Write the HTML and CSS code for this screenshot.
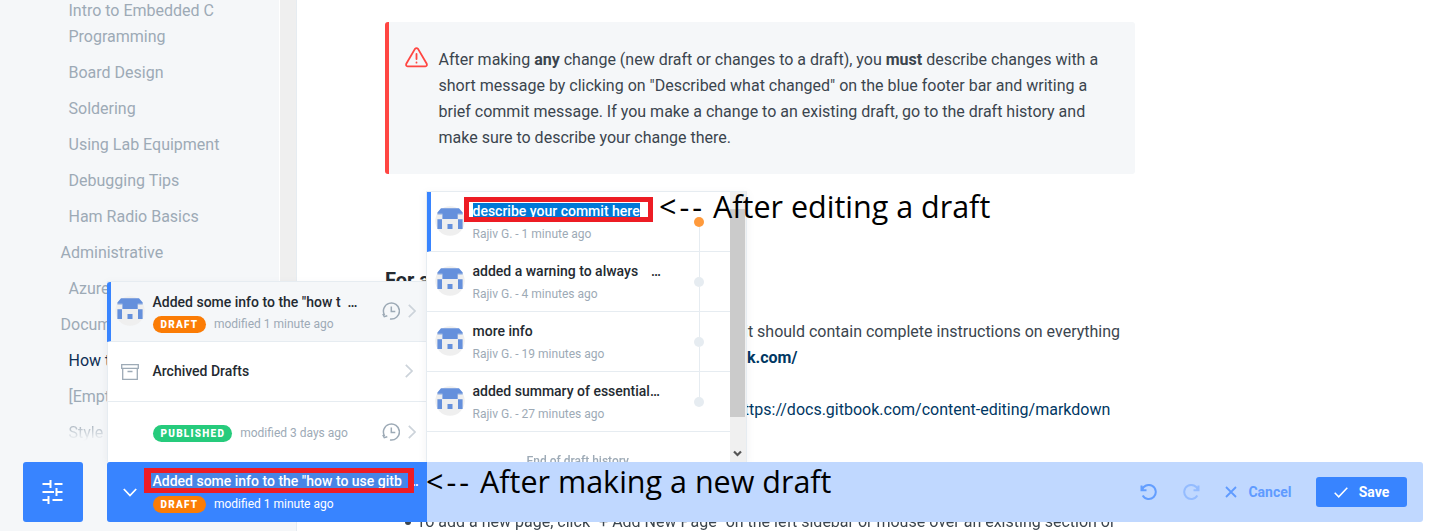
FILE: index.html
```html
<!DOCTYPE html>
<html lang="en">
<head>
<meta charset="utf-8">
<title>Draft workflow</title>
<link rel="stylesheet" href="styles.css">
</head>
<body>
<svg class="defs" aria-hidden="true">
  <symbol id="avatar" viewBox="0 0 30 30">
    <circle cx="15" cy="15" r="14.7" fill="#efefef"/>
    <path fill="#6590dc" d="M6 2.300h18l3.700 4.200v1.300h-5v5.200H7.400V7.800H2.400V6.500zM2.400 13.200h4.600v9.900h-4.600zM23 13.200h4.600v9.900H23zM12.500 18h5v5.100h-5z"/>
    <path d="M2.400 7.800h5v1h-5zM22.700 7.800h5v1h-5z" fill="#6590dc" opacity=".5"/>
  </symbol>
  <symbol id="history" viewBox="0 0 18 18">
    <path d="M2.600 13.200A8 8 0 1 1 8 16.900M.800 11.800l1.500 2.900 3-1M9.300 4.600v5h4" fill="none" stroke="currentColor" stroke-width="1.500"/>
  </symbol>
  <symbol id="chevron" viewBox="0 0 8 14">
    <path d="M.8.8 7 7 .8 13.200" fill="none" stroke="currentColor" stroke-width="1.700"/>
  </symbol>
</svg>
<div class="app">
  <aside class="sidebar">
    <nav class="nav">
      <a class="sub">Intro to Embedded C Programming</a>
      <a class="sub">Board Design</a>
      <a class="sub">Soldering</a>
      <a class="sub">Using Lab Equipment</a>
      <a class="sub">Debugging Tips</a>
      <a class="sub">Ham Radio Basics</a>
      <a>Administrative</a>
      <a class="sub">Azure</a>
      <a>Documentation</a>
      <a class="sub current">How to</a>
      <a class="sub">[Empty]</a>
      <a class="sub fade">Style</a>
    </nav>
    <div class="track"></div>
  </aside>

  <main class="content">
    <div class="callout">
      <svg class="warn" viewBox="0 0 24 22" fill="none" stroke="#ff4642" stroke-width="1.900" stroke-linecap="round" stroke-linejoin="round"><path d="M10.400 2 1.300 17.600Q.6 20 2.700 20.200H21.300Q23.400 20 22.700 17.600L13.600 2Q12 .2 10.400 2zM12 7.300v5.400M12 16.200v.2"/></svg>
      <p>After making <b>any</b> change (new draft or changes to a draft), you <b>must</b> describe changes with a short message by clicking on "Described what changed" on the blue footer bar and writing a brief commit message. If you make a change to an existing draft, go to the draft history and make sure to describe your change there.</p>
    </div>
    <h2>For a</h2>
    <p class="tail">it should contain complete instructions on everything<br><b class="link host">k.com/</b></p>
    <p class="tail url link">https://docs.gitbook.com/content-editing/markdown</p>
    <div class="bullet"><i></i><span>To add a new page, click "+ Add New Page" on the left sidebar or mouse over an existing section or</span></div>
  </main>

  <section class="drafts">
    <div class="draft active">
      <svg class="avatar"><use href="#avatar"/></svg>
      <div class="info"><div class="title">Added some info to the "how t&nbsp; …</div><div class="meta"><span class="badge">DRAFT</span>modified 1 minute ago</div></div>
      <svg class="clock"><use href="#history"/></svg><svg class="chev"><use href="#chevron"/></svg>
    </div>
    <div class="draft archived">
      <svg class="archive" viewBox="0 0 18 16" fill="none" stroke="#9daab6" stroke-width="1.300"><path d="M.7.7h16.600v3.600H.7zM1.700 4.300v11h14.600v-11M6.500 7.500h5"/></svg>
      <div class="info"><div class="title">Archived Drafts</div></div>
      <svg class="chev far"><use href="#chevron"/></svg>
    </div>
    <div class="draft published">
      <span class="blank"></span>
      <div class="info"><div class="meta"><span class="badge green">PUBLISHED</span>modified 3 days ago</div></div>
      <svg class="clock"><use href="#history"/></svg><svg class="chev"><use href="#chevron"/></svg>
    </div>
  </section>

  <section class="revisions">
    <div class="list">
      <div class="rev first"><svg class="avatar"><use href="#avatar"/></svg><div class="info"><div class="title"><span class="selected">describe your commit here</span></div><div class="meta">Rajiv G. - 1 minute ago</div></div><i class="dot"></i></div>
      <div class="rev"><svg class="avatar"><use href="#avatar"/></svg><div class="info"><div class="title">added a warning to always <span class="gap">…</span></div><div class="meta">Rajiv G. - 4 minutes ago</div></div><i class="dot"></i></div>
      <div class="rev"><svg class="avatar"><use href="#avatar"/></svg><div class="info"><div class="title">more info</div><div class="meta">Rajiv G. - 19 minutes ago</div></div><i class="dot"></i></div>
      <div class="rev last"><svg class="avatar"><use href="#avatar"/></svg><div class="info"><div class="title">added summary of essential…</div><div class="meta">Rajiv G. - 27 minutes ago</div></div><i class="dot"></i></div>
      <div class="end">End of draft history</div>
    </div>
    <div class="scroll"><div class="thumb"></div><svg viewBox="0 0 9 7"><path d="M1 1.500 4.500 5 8 1.500" fill="none" stroke="#555" stroke-width="2.200"/></svg></div>
  </section>

  <button class="settings" aria-label="Settings"><svg viewBox="0 0 22 24" fill="none" stroke="#fff" stroke-width="2"><path d="M.5 4H9M12.500 4H20.500M8.500 0v8M.5 12H12M14.500 12H20.500M14.500 8v8M.5 20H7M10.500 20H20.500M6.500 16v8"/></svg></button>

  <footer class="bar">
    <div class="summary">
      <svg class="down" viewBox="0 0 14 9"><path d="M.8 1 7 7.500 13.200 1" fill="none" stroke="#fff" stroke-width="1.800"/></svg>
      <div class="info"><div class="title"><span class="message">Added some info to the "how to use gitb</span><span class="dots">…</span></div><div class="meta"><span class="badge">DRAFT</span>modified 1 minute ago</div></div>
    </div>
    <div class="actions">
      <svg class="undo" viewBox="0 0 18 17" fill="none" stroke="#639eff" stroke-width="2"><path d="M1.500 1.500v4.800h5M2 6.200A7 7 0 1 1 2.700 11.500"/></svg>
      <svg class="redo" viewBox="0 0 18 17" fill="none" stroke="#94bcff" stroke-width="2"><path d="M16.500 1.500v4.800h-5M16 6.200A7 7 0 1 0 15.300 11.500"/></svg>
      <svg class="x" viewBox="0 0 12 12" fill="none" stroke="#5f9bff" stroke-width="1.800"><path d="m1 1 10 10M11 1 1 11"/></svg>
      <span class="cancel">Cancel</span>
      <button class="save"><svg viewBox="0 0 14 11" fill="none" stroke="#fff" stroke-width="1.500"><path d="m.7 5.800 4 4L13.300.7"/></svg>Save</button>
    </div>
  </footer>

  <div class="mark mark-edit"></div>
  <div class="mark mark-new"></div>
  <div class="note note-edit"><span class="arrow">&lt;--</span> <span>After editing a draft</span></div>
  <div class="note note-new"><span class="arrow">&lt;--</span> <span>After making a new draft</span></div>
</div>
</body>
</html>
```
FILE: styles.css
```css
* { box-sizing: border-box; }
body { margin: 0; font-family: Roboto, "Liberation Sans", sans-serif; background: #fff; color: #3b454e; }
p, h2 { margin: 0; }
svg { display: block; flex: none; }
button { border: 0; padding: 0; font: inherit; }
.defs { position: absolute; width: 0; height: 0; }
.app { position: relative; display: flex; width: 1433px; height: 531px; overflow: hidden; }

.sidebar { display: flex; flex: none; width: 297px; background: #f5f7f9; border-right: 1px solid #e6ecf1; }
.nav { width: 279px; margin-top: -7px; font-size: 16px; line-height: 26px; color: #9daab6; }
.nav a { display: block; padding: 5px 50px 5px 60.5px; }
.nav .sub { padding-left: 68.5px; }
.nav .current { color: #0f2f55; }
.nav .fade { color: transparent; background: linear-gradient(#a7b2bd 25%, #f5f7f9 72%); -webkit-background-clip: text; background-clip: text; }
.track { width: 17px; height: 440px; background: #efefef; border-left: 1px solid #fff; }

.content { width: 850px; padding: 22px 0 0 88px; font-size: 16px; line-height: 26px; }
.callout { display: flex; width: 750px; height: 152px; padding: 25px 24px 24px 16px; border-left: 4px solid #ff4642; border-radius: 3px; background: #f5f7f9; }
.warn { width: 23px; height: 21px; margin: 0 10.500px 0 0; }
.callout p { width: 670px; }
h2 { margin-top: 91px; font-size: 20px; line-height: 30px; color: #242a31; }
.tail { width: 392px; margin: 24px 0 0 359px; white-space: nowrap; }
.tail.url { margin-top: 26px; text-indent: -9px; }
.host { margin-left: 3px; }
.link { color: #003763; }
.bullet { display: flex; align-items: center; gap: 5.500px; margin: 86px 0 0 20px; white-space: nowrap; filter: blur(.6px); }
.bullet i { width: 6px; height: 6px; border-radius: 50%; background: #3b454e; }

.info { flex: 1; min-width: 0; }
.title { font-size: 14px; font-weight: 500; line-height: 20px; color: #242a31; white-space: nowrap; }
.meta { display: flex; align-items: center; font-size: 12px; line-height: 17px; color: #9daab6; white-space: nowrap; }
.avatar { width: 30px; height: 30px; }
.badge { height: 17px; margin-right: 8px; padding: 0 7.500px 0 8px; border-radius: 9px; background: #fb7c05; color: #fff; font-size: 10px; font-weight: 900; line-height: 17px; letter-spacing: 1.250px; }
.green { padding-right: 7px; background: #26cb7c; }

.drafts { position: absolute; left: 107px; top: 281px; width: 320px; height: 181px; border-top: 1px solid #e6ecf1; border-left: 1px solid #e6ecf1; background: #fff; box-shadow: 0 3px 8px rgba(116,129,141,.1); }
.draft { display: flex; align-items: center; height: 60px; padding: 0 11.500px 1px 6.500px; border-bottom: 1px solid #e6ecf1; }
.draft.active { margin-left: -1px; padding-left: 3.500px; border-left: 4px solid #3884ff; border-top-left-radius: 3px; background: #f5f7f9; }
.draft .info { margin-left: 8px; }
.draft.active .info { padding-top: 1px; }
.draft.active .title { margin-bottom: 4px; }
.draft.published { border-bottom: 0; }
.draft.published .info { padding-top: 3px; }
.draft.active .info { padding-top: 2px; }
.blank { width: 30px; }
.archive { width: 18px; height: 16px; margin: 1px 6px 0; }
.clock { width: 18px; height: 18px; color: #9daab6; }
.chev { width: 8px; height: 14px; margin-left: 8px; color: #ccd3da; }
.far { margin-right: 3px; }

.revisions { position: absolute; left: 426px; top: 191px; display: flex; width: 321px; height: 271px; border: 1px solid #e6ecf1; border-bottom: 0; background: #fff; box-shadow: 0 3px 8px rgba(116,129,141,.1); overflow: hidden; }
.list { flex: none; width: 303px; }
.rev { display: flex; height: 60px; padding: 14px 26px 0 8px; border-bottom: 1px solid #e6ecf1; }
.rev .info { margin: -5px 0 0 7.500px; }
.rev .meta { margin-top: 5px; }
.rev.first { padding-left: 4px; border-left: 4px solid #3884ff; }
.gap { margin-left: 9.500px; }
.selected { background: #0078d7; color: #fff; }
.dot { position: relative; width: 10px; height: 10px; margin-top: 11px; border-radius: 50%; background: #e6ecf1; }
.first .dot { background: #ff9a3c; }
.rev:not(.last) .dot::after { content: ""; position: absolute; left: 5px; top: 10px; width: 1px; height: 50px; background: #e6ecf1; }
.end { padding: 20px 0 0 99.500px; font-size: 12px; line-height: 18px; font-weight: 500; color: #9daab6; filter: blur(.5px); }
.scroll { flex: 1; padding-top: 17px; background: #f0f0f0; }
.thumb { width: 15px; height: 208px; background: #cbcbcb; }
.scroll svg { width: 9px; height: 7px; margin: 33px 0 0 3px; }

.settings { position: absolute; left: 23px; top: 462px; display: grid; place-items: center; width: 60px; height: 60px; border-radius: 3px; background: #3884ff; }
.settings svg { width: 22px; height: 24px; }
.bar { position: absolute; left: 107px; top: 462px; display: flex; width: 1316px; height: 60px; border-radius: 3px; background: #c0d8ff; overflow: hidden; }
.summary { display: flex; align-items: center; flex: none; width: 320px; padding: 0 0 0 15.500px; background: #3884ff; }
.summary .info { margin-left: 16px; }
.summary .title, .summary .meta { color: #fff; }
.summary .title { margin: -1px 0 5px; }
.message { margin-left: -2px; padding: 0 4px 0 2px; background: #4785e5; }
.down { width: 14px; height: 9px; }
.dots { margin-left: 3px; }
.actions { display: flex; align-items: center; flex: 1; justify-content: flex-end; padding-right: 16px; font-size: 14px; font-weight: 500; }
.undo, .redo { width: 18px; height: 17px; margin-right: 24px; filter: blur(.4px); }
.redo { margin-right: 25.500px; }
.x { width: 12px; height: 12px; margin-right: 11px; filter: blur(.4px); }
.cancel { margin-right: 24.500px; color: #5f9bff; font-weight: 700; }
.save { display: flex; align-items: center; justify-content: center; gap: 11px; width: 91px; height: 30px; border-radius: 3px; background: #3884ff; color: #fff; font-weight: 700; }
.save svg { width: 14px; height: 11px; }

.mark { position: absolute; border: 5px solid #ed1c24; }
.mark-edit { left: 464px; top: 197px; width: 189px; height: 25px; }
.mark-new { left: 144px; top: 468px; width: 270px; height: 25px; border-width: 5px 6px 5px 7px; }
.note { position: absolute; display: flex; font-family: "Open Sans", "Noto Sans", sans-serif; font-size: 30.500px; line-height: 40px; color: #000; white-space: nowrap; }
.arrow { width: 54px; letter-spacing: 3px; }
.note-edit { left: 659px; top: 186px; }
.note-new { left: 426px; top: 461px; }
```
